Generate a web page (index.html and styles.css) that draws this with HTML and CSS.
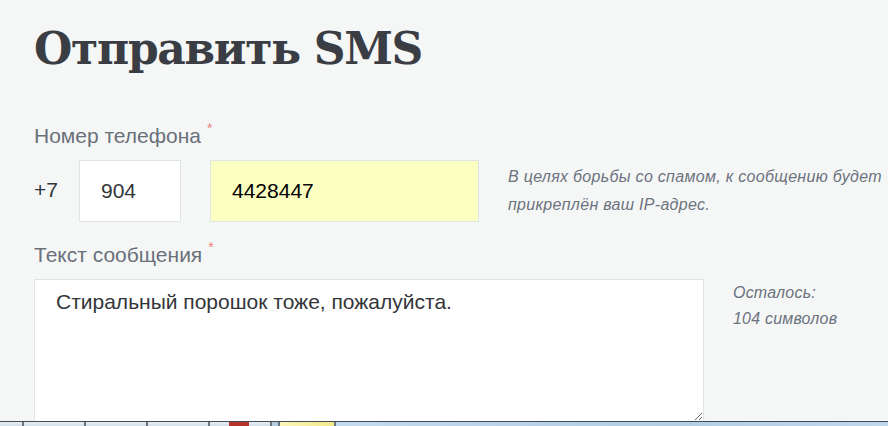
FILE: index.html
```html
<!DOCTYPE html>
<html lang="ru">
<head>
<meta charset="utf-8">
<title>Отправить SMS</title>
<link rel="stylesheet" href="styles.css">
</head>
<body>
<div class="screen">
  <main class="page">
    <h1 class="title">Отправить SMS</h1>

    <div class="label">Номер телефона<span class="req">*</span></div>
    <div class="phone-row">
      <span class="prefix">+7</span>
      <input class="input code" type="text" value="904">
      <input class="input number" type="text" value="4428447">
      <p class="hint">В целях борьбы со спамом, к сообщению будет<br>прикреплён ваш IP-адрес.</p>
    </div>

    <div class="label label-msg">Текст сообщения<span class="req">*</span></div>
    <div class="msg-row">
      <textarea class="message">Стиральный порошок тоже, пожалуйста.</textarea>
      <p class="counter">Осталось:<br>104 символов</p>
    </div>
  </main>

  <div class="taskbar">
    <div class="tab t1"></div>
    <div class="tab t2"></div>
    <div class="tab t3"></div>
    <div class="tab t4"></div>
    <div class="tab t5"><span class="tab-mark"></span></div>
    <div class="tab t6"></div>
    <div class="tab t7"></div>
    <div class="tab t8"></div>
  </div>
</div>
</body>
</html>
```

FILE: styles.css
```css
* { box-sizing: border-box; }

html, body {
  margin: 0;
  padding: 0;
  width: 888px;
  height: 426px;
  overflow: hidden;
  background: #f5f7f7;
}

.screen {
  display: flex;
  flex-direction: column;
  width: 888px;
  height: 426px;
}

.page {
  flex: 1;
  overflow: hidden;
  padding: 23px 0 0 34px;
  font-family: "Liberation Sans", Arial, sans-serif;
}

.title {
  margin: 0;
  font-family: "DejaVu Serif", serif;
  font-weight: bold;
  font-size: 44px;
  line-height: 52px;
  color: #3a3d43;
  letter-spacing: -1.3px;
}

.label {
  margin-top: 50px;
  font-size: 21px;
  line-height: 22px;
  color: #6a707a;
}

.label-msg {
  margin-top: 22px;
}

.req {
  display: inline-block;
  margin-left: 6px;
  font-size: 14px;
  line-height: 0;
  vertical-align: 10px;
  color: #ee7f7f;
}

.phone-row {
  display: flex;
  align-items: flex-start;
  margin-top: 13px;
}

.prefix {
  flex: 0 0 45px;
  display: flex;
  align-items: center;
  height: 62px;
  padding-bottom: 3px;
  font-size: 21px;
  color: #333539;
}

.input {
  flex-shrink: 0;
  height: 62px;
  margin: 0;
  padding: 0 0 0 21px;
  border: 1px solid #dfe4e8;
  border-radius: 0;
  outline: none;
  font-family: "Liberation Sans", Arial, sans-serif;
  font-size: 21px;
}

.code {
  width: 102px;
  background: #ffffff;
  color: #333539;
}

.number {
  width: 269px;
  margin-left: 29px;
  background: #fbffc0;
  color: #000000;
}

.hint {
  flex-shrink: 0;
  margin: 3px 0 0 29px;
  white-space: nowrap;
  font-style: italic;
  font-size: 16px;
  letter-spacing: 0.3px;
  line-height: 28px;
  color: #6c727e;
}

.msg-row {
  display: flex;
  align-items: flex-start;
  margin-top: 13px;
}

.message {
  flex-shrink: 0;
  display: block;
  width: 670px;
  height: 143px;
  margin: 0;
  padding: 10px 21px;
  border: 1px solid #dfe4e8;
  border-radius: 0;
  outline: none;
  background: #ffffff;
  font-family: "Liberation Sans", Arial, sans-serif;
  font-size: 21px;
  line-height: 24px;
  color: #333539;
}

.counter {
  flex-shrink: 0;
  margin: 1px 0 0 29px;
  font-style: italic;
  font-size: 16px;
  letter-spacing: 0.2px;
  line-height: 26px;
  color: #6c727e;
}

/* bottom OS taskbar strip */
.taskbar {
  display: flex;
  flex-shrink: 0;
  height: 5px;
  border-top: 1px solid #414b55;
  background: #b9d2e8;
}

.tab {
  flex-shrink: 0;
  height: 4px;
  border-right: 2px solid #6b7580;
  background: linear-gradient(#e9eff5, #d4e0ea);
}

.t1 { width: 24px; }
.t2 { width: 62px; }
.t3 { width: 62px; }
.t4 { width: 62px; }
.t5 { width: 62px; display: flex; padding-left: 19px; }
.t6 { width: 8px; background: #b4cce0; }
.t7 { width: 56px; background: linear-gradient(90deg, #fbf5b8, #f3ea8a); }
.t8 { flex: 1 1 auto; border-right: none; background: linear-gradient(90deg, #c3daee, #b2cde4 60%, #c0d7ec); }

.tab-mark {
  width: 20px;
  height: 4px;
  background: #b8322c;
}
```
